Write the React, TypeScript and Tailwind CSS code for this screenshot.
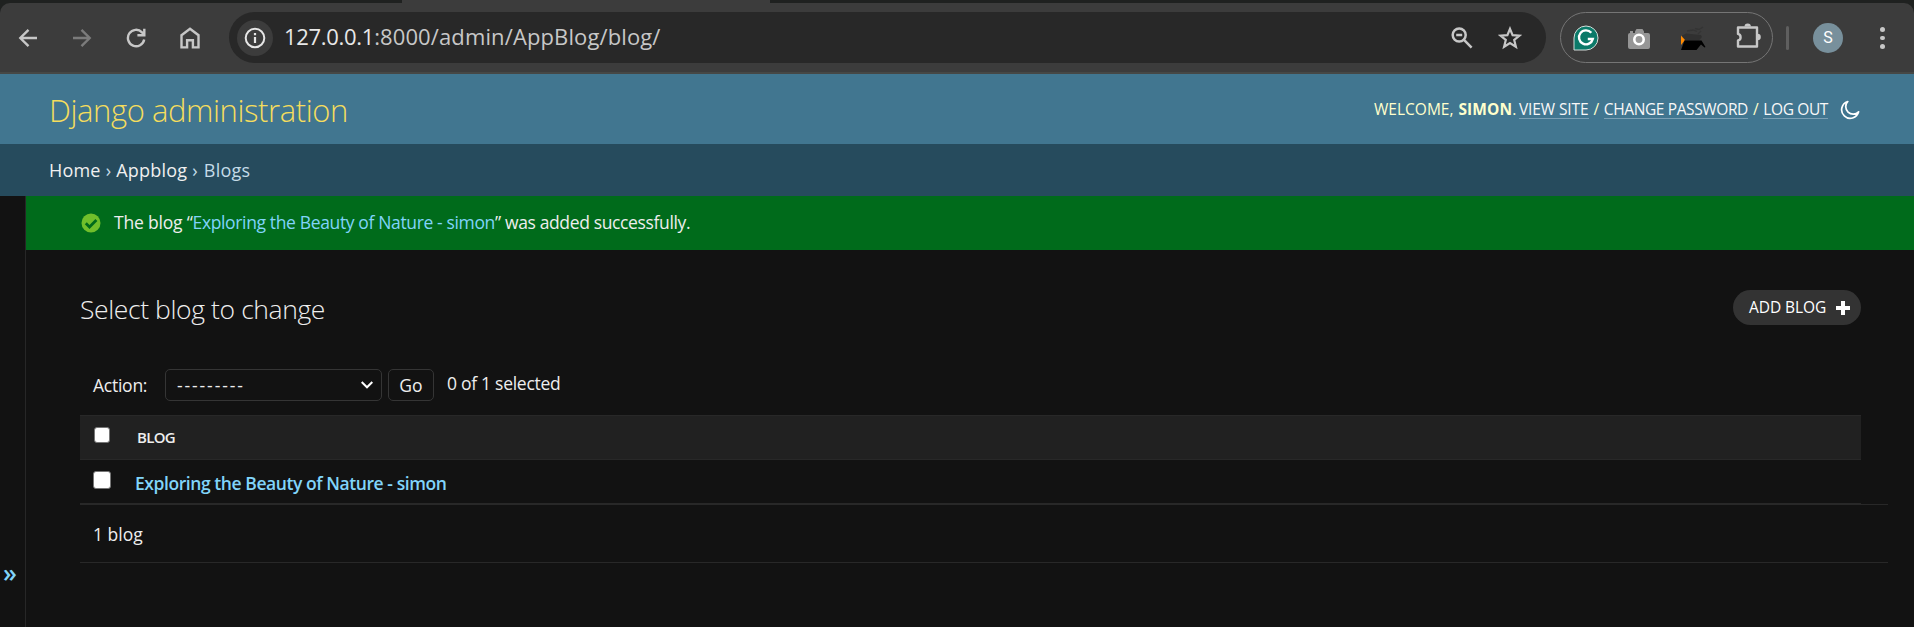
import type { ReactNode } from 'react';

function Back({ flip = false }: { flip?: boolean }) {
  return (
    <svg viewBox="0 0 20 20" className={flip ? 'size-5 rotate-180 text-[#7b7b7b]' : 'size-5 text-[#c7c7c7]'} fill="none" stroke="currentColor" strokeWidth="2.4">
      <path d="M19 10H2.5M10.5 1.8 2.3 10l8.2 8.2" />
    </svg>
  );
}

function Reload() {
  return (
    <svg viewBox="0 0 20 20" className="size-5 text-[#c7c7c7]" fill="none" stroke="currentColor" strokeWidth="2.4">
      <path d="M18.2 11.5A8.2 8.2 0 1 1 16 4.3L18 6.4" />
      <path d="M18.3.8v6.4h-6.9" />
    </svg>
  );
}

function Home() {
  return (
    <svg viewBox="0 0 20 22" className="h-[22px] w-5 text-[#c7c7c7]" fill="none" stroke="currentColor" strokeWidth="2.4">
      <path d="M1.5 8.2 10 1.8l8.5 6.4v12.2h-5.6v-7.2H7.1v7.2H1.5z" />
    </svg>
  );
}

function Info() {
  return (
    <svg viewBox="0 0 22 22" className="size-[22px] text-[#e6e6e6]" fill="none" stroke="currentColor" strokeWidth="2">
      <circle cx="11" cy="11" r="9.3" />
      <path d="M11 10v6M11 6v2.2" strokeWidth="2.2" />
    </svg>
  );
}

function ZoomOut() {
  return (
    <svg viewBox="0 0 22 22" className="size-[22px] text-[#c7c7c7]" fill="none" stroke="currentColor" strokeWidth="2.5">
      <circle cx="8.2" cy="8" r="6.5" />
      <path d="m13 12.8 7.6 7.8M5.2 8h6" />
    </svg>
  );
}

function Star() {
  return (
    <svg viewBox="0 0 24 24" className="size-6 text-[#c7c7c7]" fill="none" stroke="currentColor" strokeWidth="2.2">
      <path d="m12 2.8 2.6 6.3 6.9.5-5.3 4.4 1.7 6.8-5.9-3.7-5.9 3.7L7.8 14 2.5 9.6l6.9-.5z" />
    </svg>
  );
}

function Grammar() {
  return (
    <svg viewBox="0 0 26 26" className="size-[26px]" fill="none">
      <path d="M1 25V13A12 12 0 1 1 13 25z" fill="#0b7a69" stroke="#d4dcd9" strokeWidth="1" />
      <path d="M18.3 7.8A7 7 0 1 0 19.8 14h-5" stroke="#fff" strokeWidth="2.4" />
    </svg>
  );
}

function Camera() {
  return (
    <svg viewBox="0 0 24 22" className="h-[22px] w-6">
      <path d="M3 3h3v2H3zM8 3.5 9.5 1h6L17 3.5V5h4a2 2 0 0 1 2 2v12a2 2 0 0 1-2 2H3a2 2 0 0 1-2-2V7a2 2 0 0 1 2-2h5z" fill="#969696" />
      <circle cx="12" cy="11.5" r="4.7" fill="#999" stroke="#fff" strokeWidth="2.6" />
    </svg>
  );
}

function BoxExtension() {
  return (
    <svg viewBox="0 0 26 26" className="size-[26px]">
      <path d="M2 10.5 6 8.5l15 1.5 1 2-3 3.5H4z" fill="#303030" />
      <path d="M7 6l6-1 4 1.5M15 3.5l4 1 4-2.5M21 6l-3 3" stroke="#343434" strokeWidth="1.3" fill="none" />
      <path d="M1 10.5l4 4.500L1 20z" fill="#ff8a00" />
      <path d="M4.5 15.5H21.5L25.5 22l-1 .5-3.500-3L16.5 25H1z" fill="#000" />
    </svg>
  );
}

function Puzzle() {
  return (
    <svg viewBox="0 0 26 26" className="size-[26px] text-[#c7c7c7]">
      <path d="M3 4.5h19v19H3v-6a3.400 3.400 0 0 0 0-6.600z" fill="none" stroke="currentColor" strokeWidth="2.4" strokeLinejoin="round" />
      <path d="M9.5 3.600a3.200 3.200 0 0 1 6.400 0zM22.600 10.800a3.200 3.200 0 0 1 0 6.400z" fill="currentColor" />
    </svg>
  );
}

function Moon() {
  return (
    <svg viewBox="0 0 20 20" className="size-5 text-white" fill="none" stroke="currentColor" strokeWidth="1.7" strokeLinejoin="round">
      <path d="M7.8 1.5A8.600 8.600 0 1 0 18.600 11.800 6.500 6.500 0 0 1 7.800 1.500z" />
    </svg>
  );
}

function ToolLink({ children }: { children: ReactNode }) {
  return <a className="block h-[21px] border-b border-[#7a9fb4] leading-[22px] text-[#f8f8f8]">{children}</a>;
}

function BrowserBar() {
  return (
    <div className="h-[74px] bg-[#1f2120]">
      <div className="flex h-[3px] pl-[402px]">
        <div className="w-[368px] bg-[#3c3c3c]" />
      </div>
      <div className="flex h-[71px] items-start rounded-t-[10px] border-b-2 border-[#464846] bg-[#3c3c3c] pt-[9px]">
        <div className="flex h-[51px] w-[229px] items-center pl-[18px]">
          <Back />
          <div className="ml-[34px]"><Back flip /></div>
          <div className="ml-[34px]"><Reload /></div>
          <div className="ml-[34px]"><Home /></div>
        </div>
        <div className="flex h-[51px] w-[1317px] items-center rounded-full bg-[#282828] pr-6 pl-2">
          <div className="flex size-9 items-center justify-center rounded-full bg-[#3c3c3c]"><Info /></div>
          <div className="mb-[3px] ml-[11px] flex-1 text-[22px] leading-[30px] text-[#c7c7c7]">
            <span className="tracking-[-0.3px] text-[#e8e8e8]">127.0.0.1</span>
            <span className="tracking-[0.12px]">:8000/admin/AppBlog/blog/</span>
          </div>
          <ZoomOut />
          <div className="ml-[25px]"><Star /></div>
        </div>
        <div className="ml-3.5 flex h-[51px] w-[213px] items-center rounded-full border border-[#757575] pl-3">
          <Grammar />
          <div className="mt-0.5 ml-7"><Camera /></div>
          <div className="mt-px ml-[29px]"><BoxExtension /></div>
          <div className="mb-1 ml-[29px]"><Puzzle /></div>
        </div>
        <div className="mt-3.5 ml-[13px] h-6 w-[3px] rounded-full bg-[#5f5f5f]" />
        <div className="mt-[11px] ml-6 flex size-[30px] items-center justify-center rounded-full bg-[#78909c] font-['Roboto'] text-[16px] text-white">S</div>
        <div className="mt-[15px] ml-[37px] flex flex-col gap-1">
          <div className="size-[4.5px] rounded-full bg-[#c7c7c7]" />
          <div className="size-[4.5px] rounded-full bg-[#c7c7c7]" />
          <div className="size-[4.5px] rounded-full bg-[#c7c7c7]" />
        </div>
      </div>
    </div>
  );
}

export default function App() {
  return (
    <div className="flex h-[627px] w-[1914px] flex-col overflow-hidden bg-[#121212] font-['Open_Sans','Noto_Sans',sans-serif] text-[17.5px] text-[#eee]">
      <BrowserBar />
      <header className="flex h-[70px] items-center justify-between bg-[#417690] pr-[54px] pl-[49px]">
        <h1 className="pt-0.5 text-[31px] leading-none font-light tracking-[-0.42px] text-[#f5dd5d]">Django administration</h1>
        <div className="mb-0.5 flex h-[21px] items-start text-[15.5px] leading-[22px] tracking-[-0.38px] text-[#ffc]">
          <span className="mr-[5px] tracking-[0px]">WELCOME,</span>
          <strong className="tracking-[0.1px]">SIMON</strong>
          <span className="mr-[3px]">.</span>
          <div className="tracking-[-0.1px]"><ToolLink>VIEW SITE</ToolLink></div>
          <span className="mx-[5px]">/</span>
          <ToolLink>CHANGE PASSWORD</ToolLink>
          <span className="mx-[5px]">/</span>
          <ToolLink>LOG OUT</ToolLink>
          <div className="ml-3 pt-0.5"><Moon /></div>
        </div>
      </header>
      <nav className="flex h-[52px] items-center gap-[5px] bg-[#264b5d] pl-[49px] text-[18px] tracking-[0.2px] text-[#f0f0f0]">
        <a>Home</a><span className="text-[#c4dce8]">›</span><a>Appblog</a><span className="mr-px text-[#c4dce8]">›</span><span className="text-[#c4dce8]">Blogs</span>
      </nav>
      <div className="flex flex-1">
        <aside className="w-[26px] border-r border-[#272727] pt-[364px] pl-[3px] text-[25px] leading-[24px] font-semibold text-[#81d4fa]">
          <span>»</span>
        </aside>
        <main className="flex-1">
          <div className="flex h-[54px] items-center bg-[#006b1b] pl-[55px]">
            <svg viewBox="0 0 20 20" className="mr-[13px] size-5">
              <circle cx="10" cy="10" r="9.5" fill="#70bf2b" />
              <path d="m4.8 10.2 3.700 3.700 6.900-7" stroke="#006b1b" strokeWidth="2.8" fill="none" />
            </svg>
            <p className="mb-0.5 tracking-[-0.36px]"><span className="tracking-[-0.2px]">The blog “</span><a className="text-[#81d4fa]">Exploring the Beauty of Nature - simon</a>” was added successfully.</p>
          </div>
          <div className="pr-[26px] pl-[54px]">
            <div className="flex h-[119px] items-start justify-between pt-10 pr-[27px]">
              <h2 className="mt-0.5 text-[26.5px] leading-[34px] font-light tracking-[-0.4px]">Select blog to change</h2>
              <a className="flex h-[35px] w-32 items-center rounded-full bg-[#333] pl-4 text-[15.5px] tracking-[-0.08px] text-white">
                ADD BLOG
                <svg viewBox="0 0 14 14" className="ml-[10px] size-3.5" fill="#fff"><path d="M5 0h4v5h5v4H9v5H5V9H0V5h5z" /></svg>
              </a>
            </div>
            <div className="flex h-[46px] items-start pl-[13px]">
              <span className="w-[72px] pt-[3px] tracking-[-0.25px]">Action:</span>
              <div className="flex h-8 w-[217px] items-center justify-between rounded-[5px] border border-[#353535] pr-2 pl-[11px]">
                <span className="tracking-[1.9px]">---------</span>
                <svg viewBox="0 0 12 8" className="h-2 w-3" fill="none" stroke="#fff" strokeWidth="2"><path d="m.7 1 5.300 5.300L11.300 1" /></svg>
              </div>
              <div className="ml-[6px] flex h-8 w-[46px] items-center justify-center rounded-[5px] border border-[#353535]">Go</div>
              <span className="ml-[13px] pt-px tracking-[-0.28px]">0 of 1 selected</span>
            </div>
            <div className="mr-[27px]">
              <div className="flex h-[45px] items-center border-y border-[#282828] bg-[#212121] pl-[14px]">
                <div className="mb-[5px] size-4 rounded-[3px] border border-[#767676] bg-white" />
                <span className="mb-px ml-[27px] text-[15px] font-semibold tracking-[-0.7px]">BLOG</span>
              </div>
              <div className="flex h-11 items-center border-b border-[#282828] pl-[13px]">
                <div className="mb-1 size-[18px] rounded-[3px] border border-[#767676] bg-white" />
                <a className="mt-[3px] ml-6 font-semibold tracking-[-0.43px] text-[#81d4fa]">Exploring the Beauty of Nature - simon</a>
              </div>
            </div>
            <div className="flex h-[59px] items-center border-y border-[#282828] pt-0.5 pl-[13px]">1 blog</div>
          </div>
        </main>
      </div>
    </div>
  );
}
